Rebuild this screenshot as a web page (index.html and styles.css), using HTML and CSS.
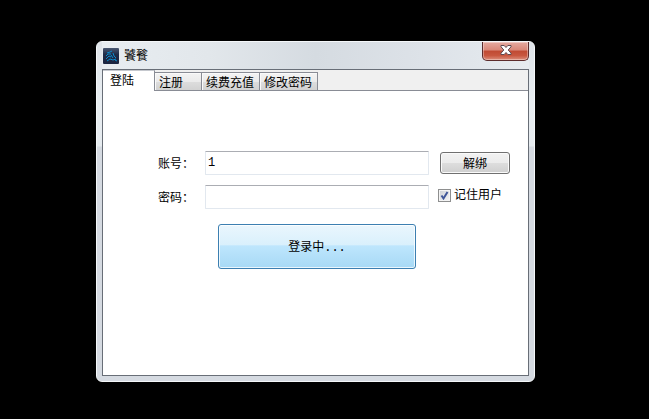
FILE: index.html
```html
<!DOCTYPE html>
<html lang="zh-CN">
<head>
	<meta charset="utf-8">
	<title>饕餮</title>
	<link rel="stylesheet" href="styles.css">
</head>
<body>
	<div class="window">
		<div class="title-bar">
			<svg class="app-icon" width="16" height="16" viewBox="0 0 16 16">
				<defs>
					<linearGradient id="icon-bg" x1="0" y1="0" x2="0" y2="1">
						<stop offset="0" stop-color="#4a5872"/>
						<stop offset="0.4" stop-color="#1f2c48"/>
						<stop offset="1" stop-color="#1b2440"/>
					</linearGradient>
				</defs>
				<rect width="16" height="16" rx="1" fill="url(#icon-bg)"/>
				<path d="M4 5l3-1 2-1M10 5l1 3 2 2M3 8l2-2 3 0M3 11l3-3 2 1M4 13l3-2 3 1 3-1M8 7l2 3M12 12l2 1" fill="none" stroke="#0b8ccd"/>
			</svg>
			<h1>饕餮</h1>
			<button class="close" type="button" aria-label="关闭">
				<svg width="12" height="10" viewBox="0 0 12 10">
					<path d="M1 .5h3.200L6 2.500 7.800.5H11v1.300L8.200 5 11 8.200v1.300H7.800L6 7.500 4.200 9.500H1V8.200L3.800 5 1 1.800z" fill="#fff" stroke="#5d4a50"/>
				</svg>
			</button>
		</div>

		<div class="client">
			<div class="tabs" role="tablist">
				<button class="tab active" type="button" role="tab" aria-selected="true">登陆</button>
				<button class="tab tab-short" type="button" role="tab">注册</button>
				<button class="tab" type="button" role="tab">续费充值</button>
				<button class="tab" type="button" role="tab">修改密码</button>
			</div>

			<form class="login-form">
				<label class="caption" for="account">账号：</label>
				<input class="field" type="text" id="account" value="1">
				<button class="unbind" type="button">解绑</button>

				<label class="caption" for="password">密码：</label>
				<input class="field" type="password" id="password">
				<label class="remember"><input type="checkbox" checked>记住用户</label>

				<button class="login" type="button">登录中...</button>
			</form>
		</div>
	</div>
</body>
</html>
```

FILE: styles.css
```css
* {
	box-sizing: border-box;
}

body {
	display: flex;
	min-height: 100vh;
	margin: 0;
	padding: 41px 114px 37px 96px;
	background: #000;
	color: #000;
	font: 12px/16px "Liberation Sans", "Noto Sans CJK SC", sans-serif;
}

button, input {
	font: inherit;
	color: inherit;
}

.window {
	display: flex;
	flex: 1;
	flex-direction: column;
	padding: 0 5px 5px;
	border: 1px solid #f4f7f9;
	border-radius: 6px;
	background: linear-gradient(#dfe4e9 0, #e8edf1 60px, #e6ebef 104px, #d5dae1 105px, #d5dae1 100%);
}

.title-bar {
	display: flex;
	align-items: center;
	gap: 5px;
	height: 27px;
	padding-left: 1px;
	background: linear-gradient(90deg, #e8edf1, #e2e7eb 25%, #d5dbe1 50%, #dde2e8 75%, #e6ebef);
}

h1 {
	flex: 1;
	margin: 0;
	font-size: 12px;
	font-weight: normal;
}

.close {
	display: flex;
	align-items: center;
	justify-content: center;
	align-self: flex-start;
	width: 47px;
	height: 19px;
	padding: 0 0 2px;
	border: 1px solid #5c2c2c;
	border-top: 0;
	border-radius: 0 0 5px 5px;
	background: linear-gradient(#e5aaa0, #d98778 45%, #c04a33 50%, #c8573f 75%, #dc8f7d);
	box-shadow: inset 0 0 0 1px rgba(255, 255, 255, 0.35);
}

.client {
	display: flex;
	flex: 1;
	flex-direction: column;
	border: 1px solid #686e77;
	background: #fff;
}

.tabs {
	display: flex;
	align-items: flex-end;
	height: 21px;
	border-bottom: 1px solid #898c95;
	background: #f0f0f0;
}

.tab {
	height: 18px;
	padding: 2px 5px 0 4px;
	border: 1px solid #898c95;
	border-left: 0;
	border-bottom: 0;
	background: linear-gradient(#f3f3f3, #ebebeb 50%, #dddddd 51%, #d2d2d2);
	box-shadow: inset 1px 1px 0 #fafafa;
	line-height: 14px;
}

.tab.active {
	height: 21px;
	margin-bottom: -1px;
	padding: 0 20px 0 7px;
	border-top-color: #c5c8ce;
	background: #fff;
	box-shadow: none;
}

.tab-short {
	padding: 2px 18px 0 4px;
}

.login-form {
	display: grid;
	grid-template-columns: 36px 1fr 70px;
	align-items: center;
	gap: 10px 11px;
	padding: 60px 18px 20px 55px;
}

.caption {
	padding-top: 2px;
}

.field {
	width: 100%;
	height: 24px;
	padding: 0 2px;
	border: 1px solid #e2e8ef;
	border-top-color: #abadb3;
	border-radius: 1px;
	outline: none;
	background: #fff;
	font-family: "Liberation Mono", "Noto Sans CJK SC", monospace;
}

.unbind {
	height: 22px;
	padding: 2px 0 0;
	border: 1px solid #707070;
	border-radius: 3px;
	background: linear-gradient(#f2f2f2, #ebebeb 50%, #dddddd 51%, #cfcfcf);
	box-shadow: inset 0 0 0 1px #fafafa;
}

.remember {
	display: flex;
	align-items: center;
	gap: 3px;
	height: 16px;
	margin: 0 0 4px -2px;
	white-space: nowrap;
}

.remember input {
	appearance: none;
	flex: none;
	width: 13px;
	height: 13px;
	margin: 0;
	border: 1px solid #8e8f8f;
	background:
		url("data:image/svg+xml,%3Csvg xmlns='http://www.w3.org/2000/svg' viewBox='0 0 11 11'%3E%3Cpath d='M2.500 5.500L4.500 8.500 8.500 2' fill='none' stroke='%233f5699' stroke-width='2'/%3E%3C/svg%3E"),
		linear-gradient(135deg, #cbcfd5, #f6f6f6);
	box-shadow: inset 0 0 0 1px #f4f4f4;
}

.login {
	grid-column: 2;
	height: 45px;
	margin: 5px 13px 0;
	padding: 2px 0 0;
	border: 1px solid #3c7fb1;
	border-radius: 3px;
	background: linear-gradient(#eaf6fd, #d9f0fc 47%, #bee6fd 48%, #a7d9f5);
	box-shadow: inset 0 0 0 1px rgba(255, 255, 255, 0.75);
	font-family: "Liberation Mono", "Noto Sans CJK SC", monospace;
}
```
